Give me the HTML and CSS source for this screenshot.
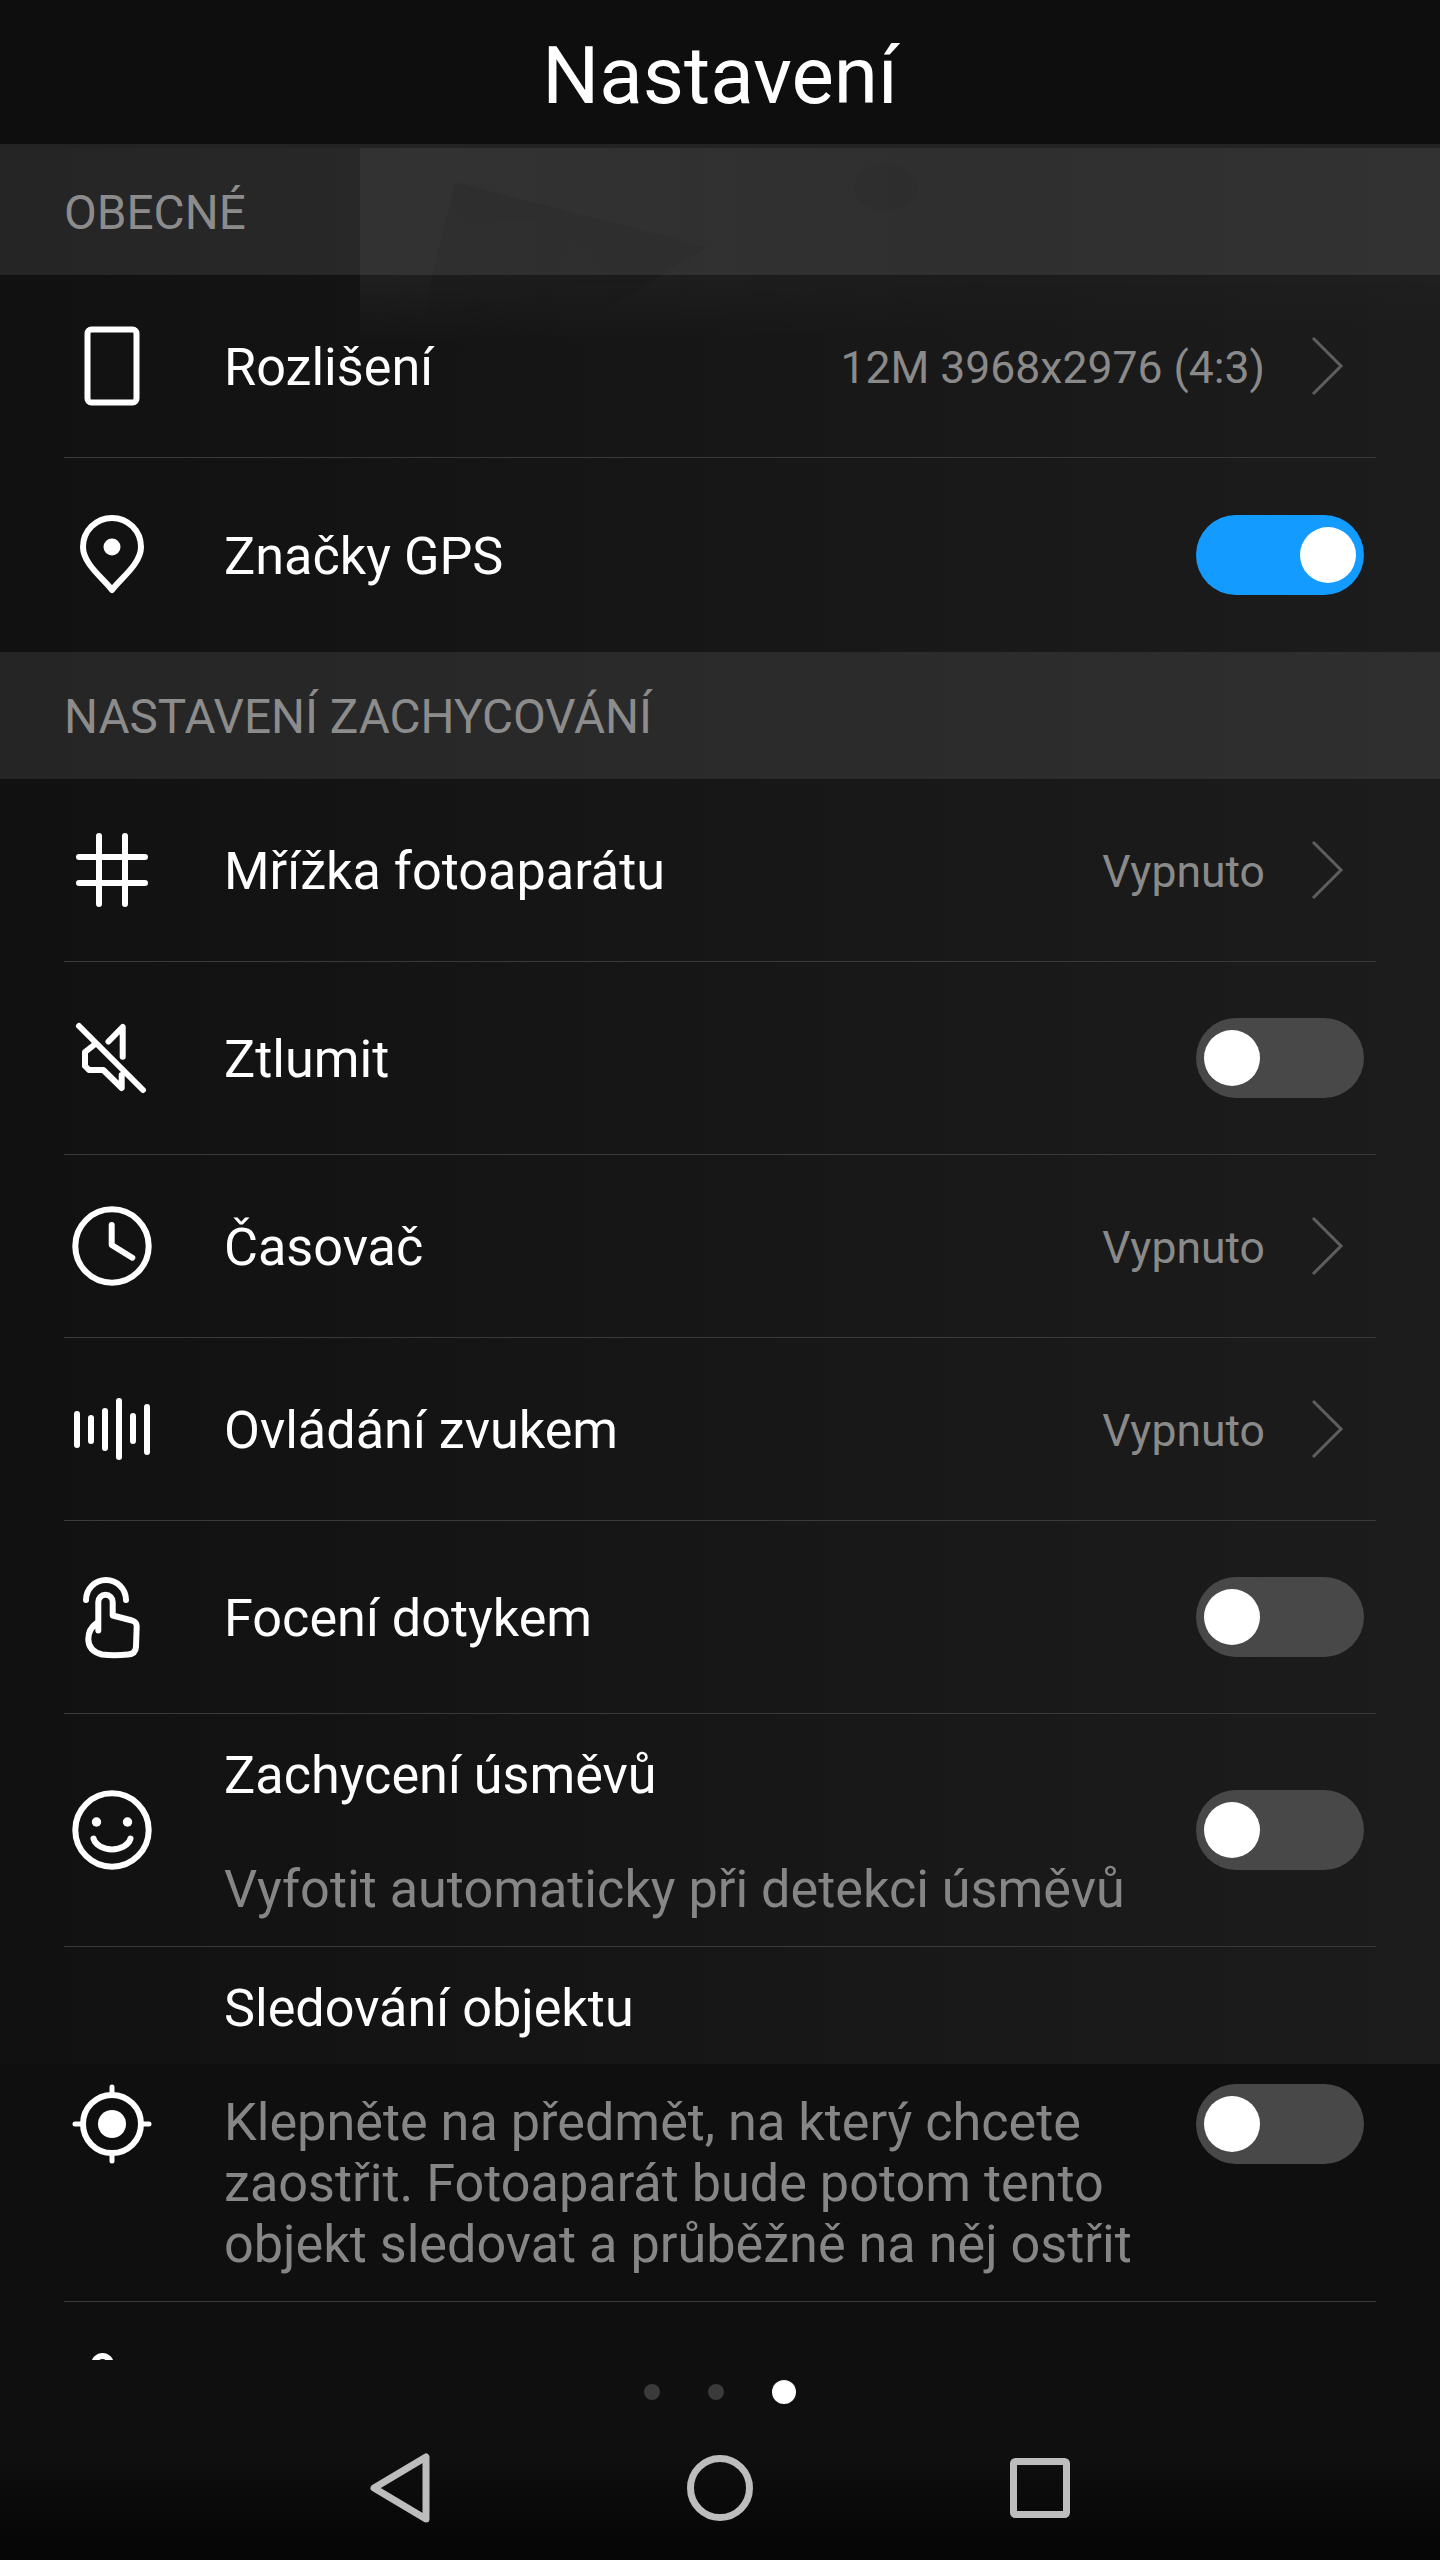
FILE: index.html
```html
<!DOCTYPE html>
<html lang="cs">
<head>
  <meta charset="UTF-8">
  <title>Nastavení</title>
  <link rel="stylesheet" href="styles.css">
</head>
<body>
  <header class="topbar">
    <h1>Nastavení</h1>
  </header>

  <main class="settings">
    <div class="backdrop"></div>

    <div class="section">OBECNÉ</div>

    <div class="row row-link">
      <svg class="icon" viewBox="0 0 96 96"><rect x="23.5" y="11.5" width="49" height="73" rx="4"/></svg>
      <span class="label">Rozlišení</span>
      <span class="value">12M 3968x2976 (4:3)</span>
      <svg class="chevron" viewBox="0 0 34 60"><path d="M2 2 L30 30 L2 58"/></svg>
    </div>
    <div class="row row-toggle row-last">
      <svg class="icon" viewBox="0 0 96 96">
        <path d="M48 83 C40 72 19 57 19 40 A29 29 0 0 1 77 40 C77 57 56 72 48 83 Z"/>
        <circle class="solid" cx="48" cy="40" r="8.5"/>
      </svg>
      <span class="label">Značky GPS</span>
      <span class="toggle toggle-on"></span>
    </div>

    <div class="section">NASTAVENÍ ZACHYCOVÁNÍ</div>

    <div class="row row-link">
      <svg class="icon" viewBox="0 0 96 96"><path d="M35 14 V82 M61 14 V82 M15 35 H81 M15 61 H81"/></svg>
      <span class="label">Mřížka fotoaparátu</span>
      <span class="value">Vypnuto</span>
      <svg class="chevron" viewBox="0 0 34 60"><path d="M2 2 L30 30 L2 58"/></svg>
    </div>
    <div class="row row-toggle">
      <svg class="icon" viewBox="0 0 96 96">
        <path d="M15 16 L79 80"/>
        <path d="M44.5 31.5 L58.7 17 V46.7"/>
        <path d="M30 35 L21 42 V56 L25 60 H39.3 L57.7 78 V65"/>
      </svg>
      <span class="label">Ztlumit</span>
      <span class="toggle"></span>
    </div>
    <div class="row row-link">
      <svg class="icon" viewBox="0 0 96 96">
        <circle cx="48" cy="48" r="36.7"/>
        <path d="M47.7 27 V47 L68.3 59.7"/>
      </svg>
      <span class="label">Časovač</span>
      <span class="value">Vypnuto</span>
      <svg class="chevron" viewBox="0 0 34 60"><path d="M2 2 L30 30 L2 58"/></svg>
    </div>
    <div class="row row-link">
      <svg class="icon" viewBox="0 0 96 96">
        <path d="M13 33 V64 M27 37 V60 M41 30 V67 M55 20 V76 M69 35 V60 M83 26 V71"/>
      </svg>
      <span class="label">Ovládání zvukem</span>
      <span class="value">Vypnuto</span>
      <svg class="chevron" viewBox="0 0 34 60"><path d="M2 2 L30 30 L2 58"/></svg>
    </div>
    <div class="row row-toggle">
      <svg class="icon" viewBox="0 0 96 96">
        <path d="M22 31 A20 20 0 0 1 62 31"/>
        <path d="M34.3 61.5 V33 A7.2 7.2 0 0 1 48.7 33 V46.5 L68 51.5 Q72.7 53 72.7 57 L72 78 Q71.5 85 64 85.5 Q50 87 38 85.5 Q24.3 82 24.3 70 Q24.3 60 32.7 54"/>
      </svg>
      <span class="label">Focení dotykem</span>
      <span class="toggle"></span>
    </div>
    <div class="row">
      <svg class="icon" viewBox="0 0 96 96">
        <circle cx="48" cy="48" r="36.7"/>
        <circle class="solid" cx="32.5" cy="40" r="4.7"/>
        <circle class="solid" cx="63.5" cy="40" r="4.7"/>
        <path d="M29.5 56.5 C34 71 62 71 66.5 56.5"/>
      </svg>
      <div class="text">
        <div class="label">Zachycení úsměvů</div>
        <div class="note">Vyfotit automaticky při detekci úsměvů</div>
      </div>
      <span class="toggle"></span>
    </div>
    <div class="row">
      <svg class="icon" viewBox="0 0 96 96">
        <circle cx="48" cy="48" r="29"/>
        <circle class="solid" cx="48" cy="48" r="14"/>
        <path class="tick" d="M48 11 V18 M48 78 V85 M11 48 H18 M78 48 H85"/>
      </svg>
      <div class="text">
        <div class="label">Sledování objektu</div>
        <div class="note">Klepněte na předmět, na který chcete<br>zaostřit. Fotoaparát bude potom tento<br>objekt sledovat a průběžně na něj ostřit</div>
      </div>
      <span class="toggle"></span>
    </div>
    <div class="row row-cut">
      <svg class="icon" viewBox="0 0 96 96"><circle cx="38.5" cy="41.4" r="8.4"/></svg>
    </div>
  </main>

  <div class="dots">
    <span class="dot"></span>
    <span class="dot"></span>
    <span class="dot dot-active"></span>
  </div>

  <nav class="navbar">
    <svg class="nav-icon" viewBox="0 0 66 72"><path d="M7 36 L59 5 V67 Z"/></svg>
    <svg class="nav-icon" viewBox="0 0 66 72"><circle cx="33" cy="36" r="29.5"/></svg>
    <svg class="nav-icon" viewBox="0 0 66 72"><rect x="6.5" y="9.5" width="53" height="53" rx="2"/></svg>
  </nav>
</body>
</html>
```

FILE: styles.css
```css
* {
  box-sizing: border-box;
}
body {
  margin: 0;
  width: 1440px;
  height: 2560px;
  overflow: hidden;
  background-color: #0f0f10;
  color: #fff;
  font-family: Roboto, sans-serif;
}
.topbar {
  height: 148px;
  padding-top: 7px;
  background-color: #0e0e0f;
  border-bottom: 4px solid #232323;
  display: flex;
  align-items: center;
  justify-content: center;
}
.topbar h1 {
  margin: 0;
  font-size: 80px;
  font-weight: 400;
}
.settings {
  position: relative;
  height: 2212px;
  overflow: hidden;
  background: linear-gradient(#0f0f10, #0f0f10) 0 1916px no-repeat,
    linear-gradient(90deg, #111 0, #141414 400px, #1a1919 1000px, #1c1c1c 1440px);
}

/* faint blurred photo showing through the panel */
.backdrop {
  position: absolute;
  left: 360px;
  top: 0;
  width: 1080px;
  height: 200px;
  background: linear-gradient(90deg, rgba(255, 255, 255, 0.05), rgba(255, 255, 255, 0.015) 640px);
  -webkit-mask-image: linear-gradient(#000 128px, transparent);
  mask-image: linear-gradient(#000 128px, transparent);
}
.backdrop::before {
  content: "";
  position: absolute;
  left: 0;
  top: 0;
  width: 400px;
  height: 200px;
  background: linear-gradient(rgba(0, 0, 0, 0.14), rgba(0, 0, 0, 0.04));
  clip-path: polygon(95px 34px, 347px 99px, 200px 190px, 60px 200px, 72px 128px);
}
.backdrop::after {
  content: "";
  position: absolute;
  left: 494px;
  top: 15px;
  width: 64px;
  height: 48px;
  border-radius: 50%;
  background-color: rgba(0, 0, 0, 0.04);
}
.section {
  position: relative;
  height: 127px;
  padding: 3px 0 0 64px;
  display: flex;
  align-items: center;
  background-color: rgba(255, 255, 255, 0.085);
  color: #8c8c8c;
  font-size: 47.7px;
}
.row {
  position: relative;
  margin: 0 64px;
  display: flex;
  align-items: center;
  border-bottom: 1px solid #3a3a3a;
}
.row-link {
  height: 183px;
}
.row-toggle {
  height: 193px;
}
.row-last {
  border-bottom: none;
  height: 194px;
}
.row-link .label,
.row-toggle .label,
.row-link .value {
  padding-top: 3px;
}
.row-cut {
  height: 120px;
  border-bottom: none;
  align-items: flex-start;
  padding-top: 21px;
}
.icon {
  flex: none;
  width: 96px;
  height: 96px;
  margin-right: 64px;
  fill: none;
  stroke: #fff;
  stroke-width: 6;
  stroke-linecap: round;
  stroke-linejoin: round;
}
.icon .solid {
  fill: #fff;
  stroke: none;
}
.icon .tick {
  stroke-width: 5;
}
.label {
  font-size: 52.2px;
  line-height: 61px;
}
.text {
  flex: 1;
  padding: 31px 0 26px;
}
.note {
  margin-top: 53px;
  font-size: 52.2px;
  line-height: 61px;
  color: #868686;
}
.value {
  margin-left: auto;
  font-size: 44.5px;
  color: #8a8a8a;
}
.chevron {
  flex: none;
  width: 34px;
  height: 60px;
  margin: 0 31px 0 46px;
  fill: none;
  stroke: #5e5e5e;
  stroke-width: 3;
}
.toggle {
  flex: none;
  margin-left: auto;
  margin-right: 12px;
  width: 168px;
  height: 80px;
  padding: 12px 8px;
  border-radius: 40px;
  background-color: #484848;
  display: flex;
}
.toggle::after {
  content: "";
  width: 56px;
  height: 56px;
  border-radius: 50%;
  background-color: #fff;
}
.toggle-on {
  background-color: #139bff;
  justify-content: flex-end;
}
.dots {
  height: 64px;
  display: flex;
  align-items: center;
  justify-content: center;
  gap: 48px;
}
.dot {
  width: 16px;
  height: 16px;
  border-radius: 50%;
  background-color: #3a3a3a;
}
.dot-active {
  width: 24px;
  height: 24px;
  background-color: #fff;
}
.navbar {
  height: 136px;
  display: flex;
  justify-content: center;
  gap: 254px;
  padding-top: 28px;
  background: linear-gradient(#0f0f10 26%, #060606 85%);
}
.nav-icon {
  width: 66px;
  height: 72px;
  fill: none;
  stroke: #bdbdbd;
  stroke-width: 7;
  stroke-linejoin: round;
}
```
